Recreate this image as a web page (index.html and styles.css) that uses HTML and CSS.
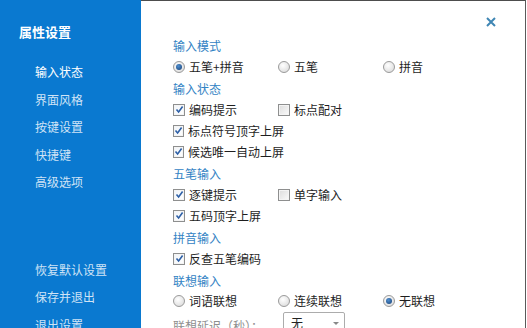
FILE: index.html
```html
<!DOCTYPE html>
<html lang="zh">
<head>
<meta charset="utf-8">
<link rel="stylesheet" href="styles.css">
</head>
<body>
<div class="window">
  <aside class="sidebar">
    <div class="title">属性设置</div>
    <nav class="nav">
      <div class="nav-item active">输入状态</div>
      <div class="nav-item">界面风格</div>
      <div class="nav-item">按键设置</div>
      <div class="nav-item">快捷键</div>
      <div class="nav-item">高级选项</div>
    </nav>
    <div class="nav bottom">
      <div class="nav-item">恢复默认设置</div>
      <div class="nav-item">保存并退出</div>
      <div class="nav-item">退出设置</div>
    </div>
  </aside>
  <main class="main">
    <div class="close">
      <svg width="10" height="10" viewBox="0 0 10 10"><path d="M1 1L9 9M9 1L1 9" stroke="#3f86b4" stroke-width="2" fill="none"/></svg>
    </div>

    <section class="group">
      <div class="head">输入模式</div>
      <div class="row">
        <label class="opt"><span class="radio on"></span>五笔+拼音</label>
        <label class="opt"><span class="radio"></span>五笔</label>
        <label class="opt"><span class="radio"></span>拼音</label>
      </div>
    </section>

    <section class="group">
      <div class="head">输入状态</div>
      <div class="row">
        <label class="opt"><span class="check on"><svg viewBox="0 0 9 9"><path d="M1.5 4.5L3.6 7L7.6 1.6" stroke="#2d5fa6" stroke-width="1.6" fill="none"/></svg></span>编码提示</label>
        <label class="opt"><span class="check"></span>标点配对</label>
      </div>
      <div class="row">
        <label class="opt"><span class="check on"><svg viewBox="0 0 9 9"><path d="M1.5 4.5L3.6 7L7.6 1.6" stroke="#2d5fa6" stroke-width="1.6" fill="none"/></svg></span>标点符号顶字上屏</label>
      </div>
      <div class="row">
        <label class="opt"><span class="check on"><svg viewBox="0 0 9 9"><path d="M1.5 4.5L3.6 7L7.6 1.6" stroke="#2d5fa6" stroke-width="1.6" fill="none"/></svg></span>候选唯一自动上屏</label>
      </div>
    </section>

    <section class="group">
      <div class="head">五笔输入</div>
      <div class="row">
        <label class="opt"><span class="check on"><svg viewBox="0 0 9 9"><path d="M1.5 4.5L3.6 7L7.6 1.6" stroke="#2d5fa6" stroke-width="1.6" fill="none"/></svg></span>逐键提示</label>
        <label class="opt"><span class="check"></span>单字输入</label>
      </div>
      <div class="row">
        <label class="opt"><span class="check on"><svg viewBox="0 0 9 9"><path d="M1.5 4.5L3.6 7L7.6 1.6" stroke="#2d5fa6" stroke-width="1.6" fill="none"/></svg></span>五码顶字上屏</label>
      </div>
    </section>

    <section class="group">
      <div class="head">拼音输入</div>
      <div class="row">
        <label class="opt"><span class="check on"><svg viewBox="0 0 9 9"><path d="M1.5 4.5L3.6 7L7.6 1.6" stroke="#2d5fa6" stroke-width="1.6" fill="none"/></svg></span>反查五笔编码</label>
      </div>
    </section>

    <section class="group last">
      <div class="head">联想输入</div>
      <div class="row">
        <label class="opt"><span class="radio"></span>词语联想</label>
        <label class="opt"><span class="radio"></span>连续联想</label>
        <label class="opt"><span class="radio on"></span>无联想</label>
      </div>
      <div class="row delay">
        <span class="delay-label">联想延迟（秒）：</span>
        <span class="select">无<span class="arrow"></span></span>
      </div>
    </section>
  </main>
</div>
</body>
</html>
```

FILE: styles.css
```css
* { box-sizing: border-box; }
html, body { margin: 0; padding: 0; }
body {
  width: 527px;
  height: 328px;
  overflow: hidden;
  font-family: "Noto Sans CJK SC", "Microsoft YaHei", sans-serif;
  background: #fff;
}
.window {
  display: flex;
  width: 527px;
  height: 328px;
}
.sidebar {
  width: 141px;
  flex: none;
  background: #0a79d0;
  color: #fff;
  padding: 23px 0 0 19px;
  display: flex;
  flex-direction: column;
}
.title {
  font-size: 13px;
  font-weight: bold;
  line-height: 18px;
  height: 18px;
}
.nav {
  display: flex;
  flex-direction: column;
  padding-left: 16px;
  margin-top: 22px;
}
.nav.bottom { margin-top: 60px; }
.nav-item {
  font-size: 12px;
  line-height: 17px;
  height: 27.5px;
  color: #cfe3f6;
}
.nav-item.active { color: #fff; }

.main {
  position: relative;
  flex: 1;
  border-top: 1px solid #4d4d4d;
  border-right: 1px solid #5a5a5a;
  margin-right: 1px;
  padding: 35px 0 0 32px;
  font-size: 12px;
  color: #1e1e1e;
}
.close {
  position: absolute;
  top: 16px;
  right: 29px;
  width: 10px;
  height: 10px;
  line-height: 0;
}
.group { margin-bottom: 2px; }
.head {
  color: #3383c4;
  line-height: 20px;
  height: 20px;
}
.group.last .head { height: 19px; }
.row {
  display: grid;
  grid-template-columns: 105px 105px auto;
  height: 21px;
  align-items: center;
}
.opt {
  display: flex;
  align-items: center;
  white-space: nowrap;
}
.check {
  width: 12px;
  height: 12px;
  border: 1px solid #8e8f8f;
  background: linear-gradient(135deg, #dcdcdc, #fbfbfb);
  margin-right: 4px;
  display: flex;
  align-items: center;
  justify-content: center;
  box-shadow: inset 0 0 0 1px #f4f4f4;
}
.check svg { width: 9px; height: 9px; }
.check.on { background: linear-gradient(135deg, #f0f4f8, #ffffff); }
.radio {
  width: 12px;
  height: 12px;
  border-radius: 50%;
  border: 1px solid #9a9a9a;
  background: radial-gradient(circle at 40% 35%, #ffffff, #d6d6d6);
  margin-right: 4px;
  display: flex;
  align-items: center;
  justify-content: center;
}
.radio.on::after {
  content: "";
  width: 6px;
  height: 6px;
  border-radius: 50%;
  background: radial-gradient(circle at 40% 35%, #4f8fd0, #173f74);
}
.delay {
  display: flex;
  height: 24px;
  margin-top: 1px;
}
.delay-label {
  color: #8e8e8e;
  width: 110px;
  padding-top: 2px;
}
.select {
  position: relative;
  width: 62px;
  height: 22px;
  border: 1px solid #acacac;
  border-radius: 2px;
  padding-left: 7px;
  line-height: 20px;
  color: #222;
  background: #fff;
  align-self: flex-start;
}
.arrow {
  position: absolute;
  right: 5px;
  top: 9px;
  width: 0;
  height: 0;
  border-left: 3px solid transparent;
  border-right: 3px solid transparent;
  border-top: 3px solid #888;
}
```
